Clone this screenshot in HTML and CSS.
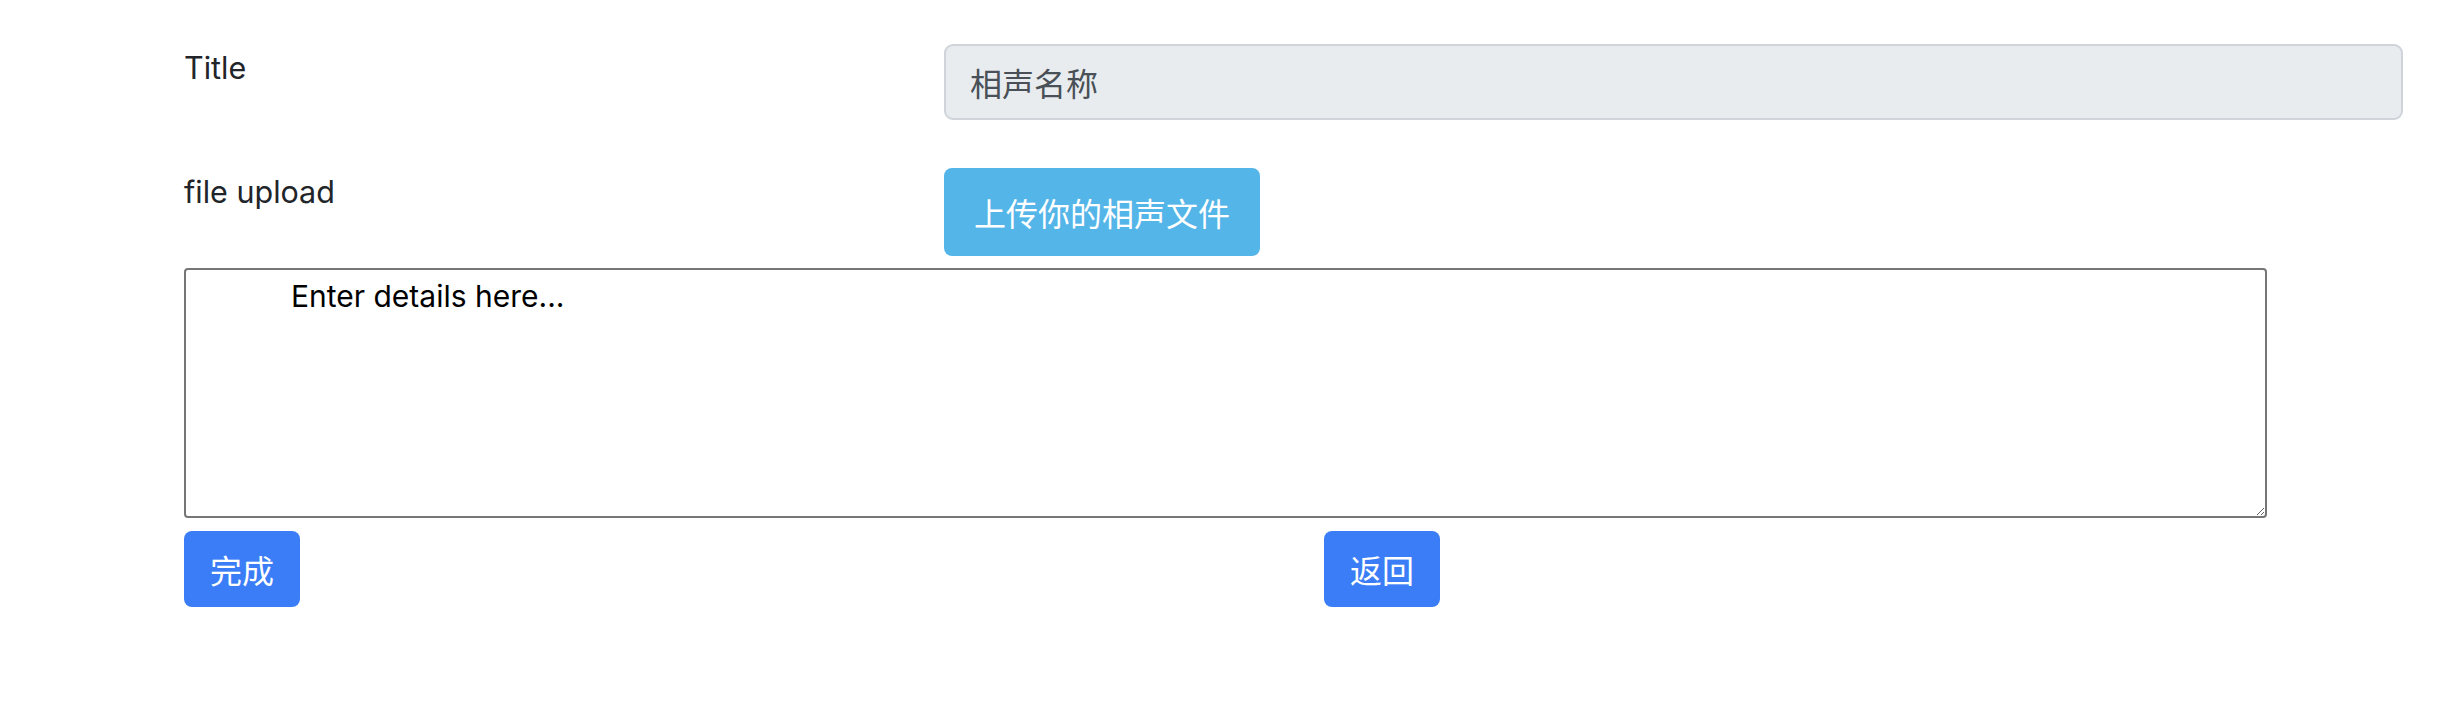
FILE: index.html
```html
<!DOCTYPE html>
<html lang="zh">
<head>
<meta charset="utf-8">
<title>相声</title>
<link rel="stylesheet" href="styles.css">
</head>
<body>
<form class="form">
  <div class="row row-title">
    <label class="label" for="title">Title</label>
    <input class="input" id="title" type="text" value="相声名称" readonly>
  </div>
  <div class="row row-upload">
    <label class="label">file upload</label>
    <div class="upload-cell"><button type="button" class="btn btn-upload">上传你的相声文件</button></div>
  </div>
  <textarea class="details">Enter details here...</textarea>
  <div class="actions">
    <div class="action-col"><button type="submit" class="btn btn-primary">完成</button></div>
    <div class="action-col"><button type="button" class="btn btn-primary">返回</button></div>
  </div>
</form>
</body>
</html>
```

FILE: styles.css
```css
* { box-sizing: border-box; }
html, body { margin: 0; padding: 0; background: #fff; }
body {
  font-family: Inter, "Noto Sans CJK SC", sans-serif;
  font-size: 32px;
  line-height: 48px;
  color: #212529;
}
.form {
  padding: 44px 61px 0 184px;
  display: flex;
  flex-direction: column;
}
.row {
  display: flex;
  align-items: flex-start;
}
.label {
  width: 760px;
  flex: none;
  font-size: 30.5px;
  line-height: 48px;
}
.row-title { margin-bottom: 48px; }
.row-upload { margin-bottom: 12px; }
.input {
  flex: 1;
  height: 76px;
  margin: 0;
  padding: 0 24px;
  font-family: "Noto Sans CJK SC", Inter, sans-serif;
  font-size: 32px;
  color: #495057;
  background: #e9ecef;
  border: 2px solid #ced4da;
  border-radius: 9px;
  outline: none;
}
.btn {
  font-family: "Noto Sans CJK SC", Inter, sans-serif;
  font-size: 32px;
  color: #fff;
  border: none;
  border-radius: 8px;
  margin: 0;
  cursor: pointer;
}
.btn-upload {
  width: 316px;
  height: 88px;
  padding: 0;
  background: #54b5e8;
}
.details {
  width: 2083px;
  height: 250px;
  margin: 0 0 13px 0;
  padding: 7px 2px 2px 2px;
  text-indent: 103px;
  font-family: Inter, "Noto Sans CJK SC", sans-serif;
  font-size: 30px;
  line-height: 38px;
  color: #000;
  border: 2px solid #767676;
  border-radius: 4px;
  background: #fff;
}
.actions {
  display: grid;
  grid-template-columns: 1140px 1140px;
}
.btn-primary {
  width: 116px;
  height: 76px;
  padding: 0;
  background: #3a7df6;
}
```
